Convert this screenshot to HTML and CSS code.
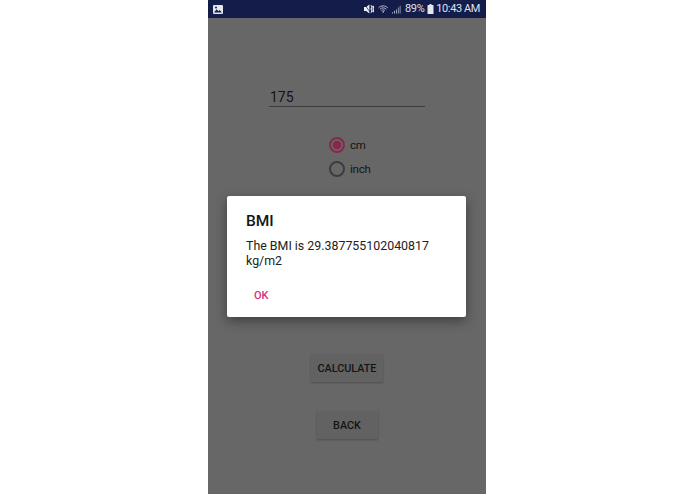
FILE: index.html
```html
<!DOCTYPE html>
<html lang="en">

<head>
    <meta charset="UTF-8" />
    <meta name="viewport" content="width=device-width, initial-scale=1.0" />
    <title>BMI</title>
    <link rel="stylesheet" href="styles.css">
</head>

<body>
    <div class="phone">
        <!-- status bar -->
        <div class="status-bar">
            <svg class="pic-icon" width="10" height="9" viewBox="0 0 10 9">
                <rect width="10" height="9" rx="1" fill="#e4e6ee" />
                <path d="M1 7.5 3.6 4.2 5.4 6.2 6.6 5 9 7.5Z" fill="#141c4a" />
                <circle cx="3" cy="2.6" r="1" fill="#141c4a" />
            </svg>
            <div class="status-right">
                <svg class="mute-icon" width="10" height="10" viewBox="0 0 10 10">
                    <path d="M0 3H2.2L5.4 .6V9.4L2.2 7H0Z" fill="#eceef4" />
                    <path d="M.8 .6 7 9.6" stroke="#141c4a" stroke-width=".7" />
                    <path d="M6.8 1.4 8.2 3 7 5 8.2 7 6.8 8.6M8.8 1.8 9.8 3 9 5 9.8 7 8.8 8.2" fill="none" stroke="#eceef4" stroke-width="1.1" />
                </svg>
                <svg class="wifi-icon" width="11" height="10" viewBox="0 0 14 10">
                    <path d="M.8 3.4C4.4 .2 8.8 .2 12.4 3.4M2.6 5.2C5 3 8.2 3 10.6 5.2M4.4 7C5.8 5.8 7.4 5.8 8.8 7" fill="none" stroke="#cfd2df" stroke-width="1.1" />
                    <circle cx="6.6" cy="8.7" r="1" fill="#cfd2df" />
                </svg>
                <svg class="signal-icon" width="9" height="9" viewBox="0 0 10 9">
                    <path d="M0 7.6H1V9H0ZM2.2 6H3.2V9H2.2ZM4.4 4.4H5.4V9H4.4ZM6.6 2.4H7.4V9H6.6ZM8.6 .4H9.4V9H8.6Z" fill="#b9bccd" />
                </svg>
                <span class="status-text">89%</span>
                <svg class="battery-icon" width="7" height="10" viewBox="0 0 6 10">
                    <path d="M2 0H4V1H5.4A.6.6 0 0 1 6 1.6V9.4A.6.6 0 0 1 5.4 10H.6A.6.6 0 0 1 0 9.4V1.6A.6.6 0 0 1 .6 1H2Z" fill="#e4e6ee" />
                </svg>
                <span class="status-text">10:43 AM</span>
            </div>
        </div>

        <!-- form behind the dialog -->
        <div class="screen">
            <div class="height-input">175</div>

            <div class="unit-group">
                <div class="unit-row">
                    <span class="radio radio-on"></span>
                    <span class="unit-label">cm</span>
                </div>
                <div class="unit-row">
                    <span class="radio"></span>
                    <span class="unit-label">inch</span>
                </div>
            </div>

            <div class="btn btn-calculate">CALCULATE</div>
            <div class="btn btn-back">BACK</div>
        </div>

        <!-- alert dialog -->
        <div class="dialog">
            <h2 class="dialog-title">BMI</h2>
            <p class="dialog-msg">The BMI is 29.387755102040817 kg/m2</p>
            <div class="dialog-ok">OK</div>
        </div>
    </div>
</body>

</html>
```

FILE: styles.css
```css
body {
    margin: 0;
    background: #fff;
    font-family: Roboto, "Liberation Sans", sans-serif;
    overflow: hidden;
}

.phone {
    position: relative;
    width: 278px;
    height: 494px;
    margin: 0 auto 0 208px;
    display: flex;
    flex-direction: column;
    background: #676767;
}

/* status bar */
.status-bar {
    height: 18px;
    flex-shrink: 0;
    padding: 0 6px 0 5px;
    display: flex;
    align-items: center;
    justify-content: space-between;
    background: #141c4a;
    color: #dfe1ea;
}

.status-right {
    display: flex;
    align-items: center;
}

.status-text {
    font-size: 11px;
    line-height: 18px;
    letter-spacing: -0.4px;
}

.wifi-icon {
    margin-left: 4px;
}

.signal-icon {
    margin: 0 4px 0 3px;
}

.battery-icon {
    margin: 0 2px 0 3px;
}

/* form */
.screen {
    flex: 1;
    display: flex;
    flex-direction: column;
    align-items: center;
}

.height-input {
    box-sizing: border-box;
    width: 156px;
    height: 29px;
    margin: 60px 0 0;
    padding-left: 1px;
    font-size: 14px;
    line-height: 38px;
    color: #141414;
    border-bottom: 1px solid #3c3c3c;
}

.unit-group {
    width: 40px;
    margin: 28px 0 0 4px;
    display: flex;
    flex-direction: column;
    gap: 4px;
}

.unit-row {
    height: 20px;
    display: flex;
    align-items: center;
    gap: 5px;
}

.radio {
    box-sizing: border-box;
    width: 16px;
    height: 16px;
    flex-shrink: 0;
    border: 2px solid #3c3c3c;
    border-radius: 50%;
    display: block;
}

.radio-on {
    border-color: #86284e;
    background: radial-gradient(circle, #86284e 0, #86284e 4px, transparent 4.6px);
}

.unit-label {
    font-size: 11.5px;
    letter-spacing: -0.2px;
    color: #141414;
}

.btn {
    height: 28px;
    display: flex;
    align-items: center;
    justify-content: center;
    font-size: 10.8px;
    font-weight: 500;
    color: #141414;
    background: #626262;
    box-shadow: 0 1px 2px rgba(0, 0, 0, 0.25);
}

.btn-calculate {
    width: 72px;
    margin-top: 175px;
}

.btn-back {
    width: 61px;
    margin-top: 29px;
}

/* dialog */
.dialog {
    position: absolute;
    left: 19px;
    top: 196px;
    box-sizing: border-box;
    width: 239px;
    height: 121px;
    padding: 16px 19px 0;
    background: #fff;
    border-radius: 2px;
    box-shadow: 0 4px 12px rgba(0, 0, 0, 0.4);
}

.dialog-title {
    margin: 0;
    font-size: 15.5px;
    font-weight: 500;
    line-height: 18px;
    color: #141414;
}

.dialog-msg {
    margin: 8px 0 0;
    font-size: 12.4px;
    line-height: 15px;
    color: #222;
}

.dialog-ok {
    margin: 20px 0 0 8px;
    font-size: 11px;
    font-weight: 500;
    line-height: 16px;
    color: #e0307c;
}
```
